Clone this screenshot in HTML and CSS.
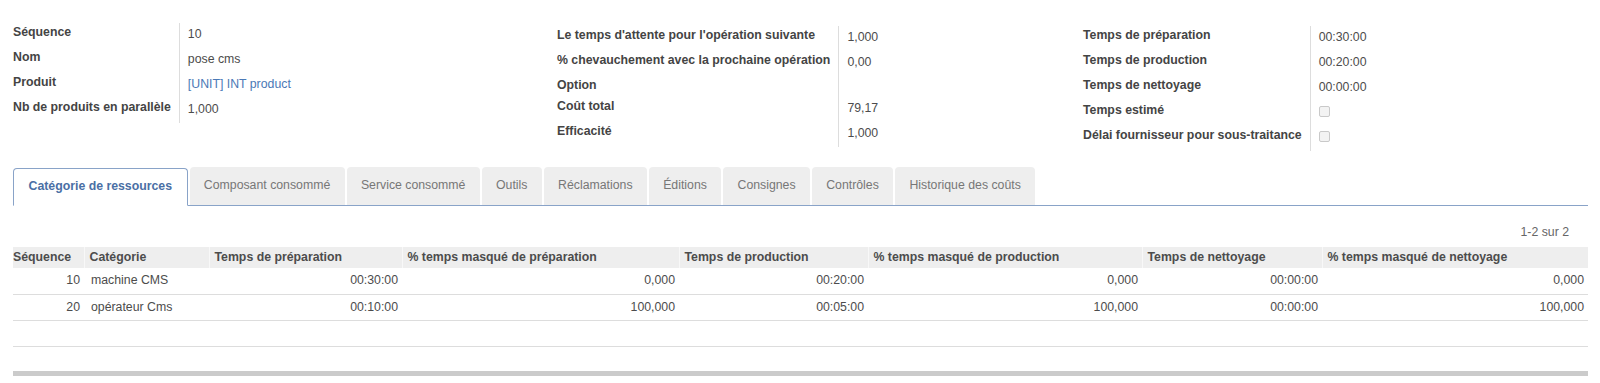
FILE: index.html
```html
<!DOCTYPE html>
<html lang="fr">
<head>
<meta charset="utf-8">
<title>Opération</title>
<link rel="stylesheet" href="styles.css">
</head>
<body>
<div class="page">
  <div class="groups">
    <div class="group g-left">
      <div class="lbl">Séquence</div><div class="val">10</div>
      <div class="lbl">Nom</div><div class="val">pose cms</div>
      <div class="lbl">Produit</div><div class="val"><a class="uri" href="#">[UNIT] INT product</a></div>
      <div class="lbl">Nb de produits en parallèle</div><div class="val">1,000</div>
    </div>
    <div class="group g-mid">
      <div class="lbl">Le temps d'attente pour l'opération suivante</div><div class="val">1,000</div>
      <div class="lbl">% chevauchement avec la prochaine opération</div><div class="val">0,00</div>
      <div class="lbl">Option</div><div class="val empty"></div>
      <div class="lbl">Coût total</div><div class="val">79,17</div>
      <div class="lbl">Efficacité</div><div class="val">1,000</div>
    </div>
    <div class="group g-right">
      <div class="lbl">Temps de préparation</div><div class="val">00:30:00</div>
      <div class="lbl">Temps de production</div><div class="val">00:20:00</div>
      <div class="lbl">Temps de nettoyage</div><div class="val">00:00:00</div>
      <div class="lbl">Temps estimé</div><div class="val"><span class="cb"></span></div>
      <div class="lbl">Délai fournisseur pour sous-traitance</div><div class="val"><span class="cb"></span></div>
    </div>
  </div>

  <ul class="tabs">
    <li class="tab active">Catégorie de ressources</li>
    <li class="tab">Composant consommé</li>
    <li class="tab">Service consommé</li>
    <li class="tab">Outils</li>
    <li class="tab">Réclamations</li>
    <li class="tab">Éditions</li>
    <li class="tab">Consignes</li>
    <li class="tab">Contrôles</li>
    <li class="tab">Historique des coûts</li>
  </ul>

  <div class="pager">1-2 sur 2</div>

  <table class="list">
    <colgroup>
      <col class="c1"><col class="c2"><col class="c3"><col class="c4"><col class="c5"><col class="c6"><col class="c7"><col class="c8">
    </colgroup>
    <thead>
      <tr>
        <th>Séquence</th>
        <th>Catégorie</th>
        <th>Temps de préparation</th>
        <th>% temps masqué de préparation</th>
        <th>Temps de production</th>
        <th>% temps masqué de production</th>
        <th>Temps de nettoyage</th>
        <th>% temps masqué de nettoyage</th>
      </tr>
    </thead>
    <tbody>
      <tr>
        <td class="num">10</td>
        <td>machine CMS</td>
        <td class="num">00:30:00</td>
        <td class="num">0,000</td>
        <td class="num">00:20:00</td>
        <td class="num">0,000</td>
        <td class="num">00:00:00</td>
        <td class="num">0,000</td>
      </tr>
      <tr>
        <td class="num">20</td>
        <td>opérateur Cms</td>
        <td class="num">00:10:00</td>
        <td class="num">100,000</td>
        <td class="num">00:05:00</td>
        <td class="num">100,000</td>
        <td class="num">00:00:00</td>
        <td class="num">100,000</td>
      </tr>
      <tr class="blank">
        <td></td><td></td><td></td><td></td><td></td><td></td><td></td><td></td>
      </tr>
    </tbody>
  </table>

  <div class="hbar"></div>
</div>
</body>
</html>
```

FILE: styles.css
```css
* { box-sizing: border-box; }

html, body {
  margin: 0;
  padding: 0;
  background: #ffffff;
}

body {
  font-family: "Liberation Sans", Arial, sans-serif;
  font-size: 12.3px;
  line-height: 17.5px;
  color: #4c4c4c;
}

.page {
  padding: 0 12px 0 13px;
}

/* ---------- field groups ---------- */
.groups {
  display: grid;
  grid-template-columns: 544px 526px 1fr;
  align-items: start;
  padding-top: 23px;
}

.group {
  display: grid;
  grid-template-columns: max-content 1fr;
}

.g-mid { margin-top: 3px; }
.g-right { margin-top: 3px; }

.lbl {
  font-weight: bold;
  color: #444444;
  white-space: nowrap;
  padding: 1px 8px 2px 0;
  border-right: 1px solid #dddddd;
}

.val {
  padding: 3px 0 4.5px 8px;
  white-space: nowrap;
}

.val.empty { padding: 0; }

.uri {
  color: #4b79b6;
  text-decoration: none;
}

.cb {
  display: inline-block;
  width: 11px;
  height: 11px;
  border: 1px solid #c9c9c9;
  border-radius: 2px;
  background: #f3f3f3;
  vertical-align: -1px;
}

/* ---------- notebook tabs ---------- */
.tabs {
  list-style: none;
  margin: 15.5px 0 0 0;
  padding: 0;
  display: flex;
  align-items: flex-end;
  border-bottom: 1px solid #89a3c8;
}

.tab {
  padding: 9.5px 13.3px 10.5px;
  margin-right: 2px;
  border: 1px solid transparent;
  border-bottom: 0;
  border-radius: 4px 4px 0 0;
  background: #eeeeee;
  color: #777777;
  white-space: nowrap;
}

.tab.active {
  background: #ffffff;
  border-color: #89a3c8;
  border-bottom: 1px solid #ffffff;
  margin-bottom: -1px;
  padding: 9.5px 14.5px;
  color: #4a6fa5;
  font-weight: bold;
}

/* ---------- pager ---------- */
.pager {
  text-align: right;
  padding: 18px 19px 0 0;
  height: 41px;
  color: #666666;
}

/* ---------- list ---------- */
.list {
  width: 100%;
  table-layout: fixed;
  border-collapse: collapse;
  border-spacing: 0;
}

.c1 { width: 71px; }
.c2 { width: 125px; }
.c3 { width: 193px; }
.c4 { width: 277px; }
.c5 { width: 189px; }
.c6 { width: 274px; }
.c7 { width: 180px; }
.c8 { width: 266px; }

.list th {
  background: #eeeeee;
  text-align: left;
  font-weight: bold;
  color: #4c4c4c;
  padding: 2px 4px 1.5px 5px;
  border-left: 1px solid #f8f8f8;
  white-space: nowrap;
  overflow: hidden;
}

.list th:first-child {
  padding-left: 0;
  border-left: 0;
}

.list td {
  padding: 4px 4px 3.5px 7px;
  border-bottom: 1px solid #dddddd;
  white-space: nowrap;
  height: 26px;
}

.list td.num { text-align: right; }

.hbar {
  margin-top: 24px;
  height: 5px;
  background: #cbcbcb;
}
```
